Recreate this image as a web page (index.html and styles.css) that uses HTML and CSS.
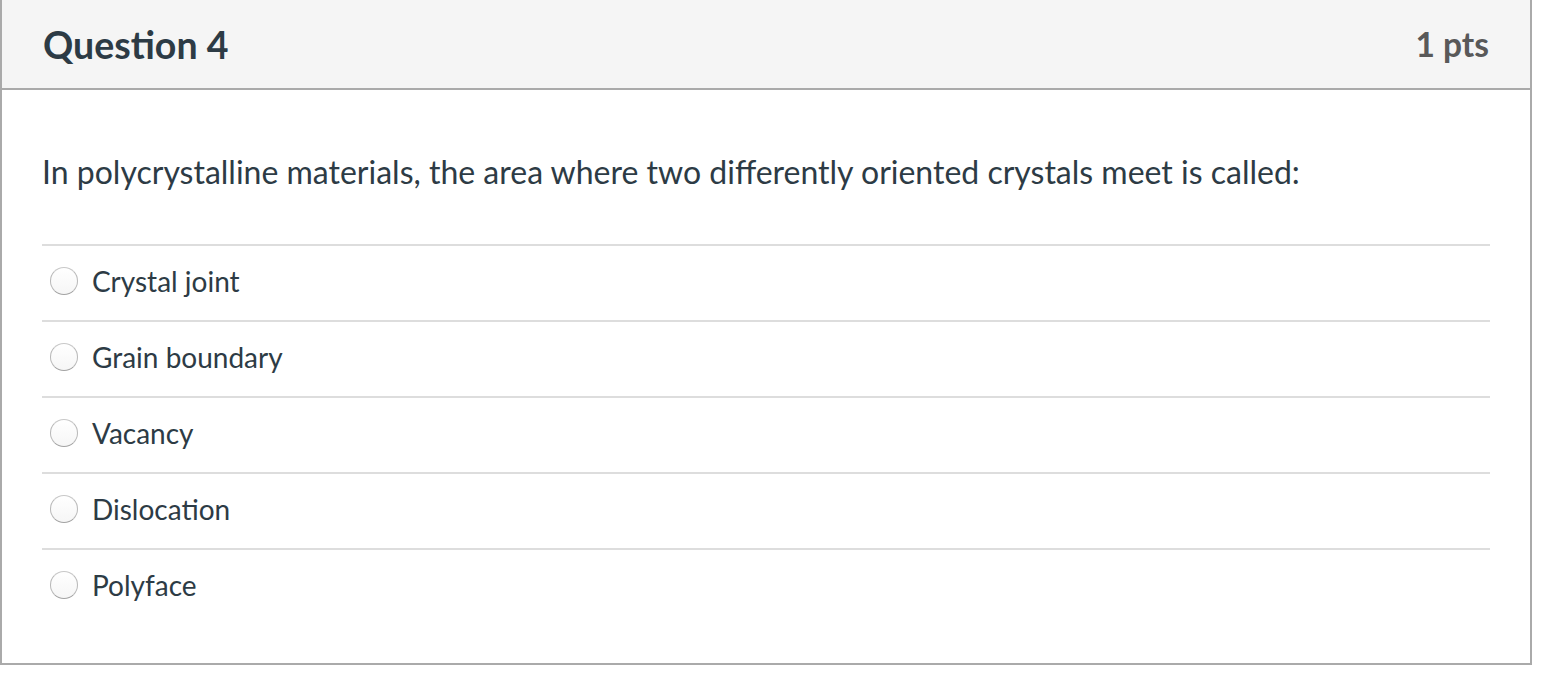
FILE: index.html
```html
<!DOCTYPE html>
<html>
<head>
<meta charset="utf-8">
<link rel="stylesheet" href="styles.css">
</head>
<body>
<div class="card">
  <div class="header">
    <span class="name">Question 4</span>
    <span class="points">1 pts</span>
  </div>
  <div class="body">
    <div class="qtext">In polycrystalline materials, the area where two differently oriented crystals meet is called:</div>
    <div class="answers">
      <div class="answer"><span class="radio"></span><span class="label">Crystal joint</span></div>
      <div class="answer"><span class="radio"></span><span class="label">Grain boundary</span></div>
      <div class="answer"><span class="radio"></span><span class="label">Vacancy</span></div>
      <div class="answer"><span class="radio"></span><span class="label">Dislocation</span></div>
      <div class="answer"><span class="radio"></span><span class="label">Polyface</span></div>
    </div>
  </div>
</div>
</body>
</html>
```
FILE: styles.css
```css
html, body {
  margin: 0;
  padding: 0;
  background: #fff;
}
body {
  font-family: Lato, "Open Sans", sans-serif;
  color: #2d3b45;
}
.card {
  width: 1528px;
  border: 2px solid #aaa;
  border-top: none;
}
.header {
  height: 88px;
  background: #f5f5f5;
  border-bottom: 2px solid #aaa;
  display: flex;
  align-items: center;
  justify-content: space-between;
  padding: 0 41px;
}
.name {
  font-size: 37.5px;
  font-weight: 700;
  color: #2d3b45;
}
.points {
  font-size: 33.5px;
  font-weight: 700;
  color: #595959;
}
.body {
  padding: 60px 40px 39px;
}
.qtext {
  font-size: 32px;
  line-height: 44px;
}
.answers {
  margin-top: 50px;
}
.answer {
  border-top: 2px solid #ddd;
  height: 74px;
  box-sizing: content-box;
  display: flex;
  align-items: center;
  padding-left: 8px;
}
.radio {
  width: 26px;
  height: 26px;
  border-radius: 50%;
  border: 1px solid;
  border-color: #c8c8c8 #b8b8b8 #a2a2a2 #b8b8b8;
  background: linear-gradient(#ffffff, #f6f6f6);
  flex: none;
  margin-top: -4px;
}
.label {
  margin-left: 14px;
  font-size: 28px;
  margin-top: -4px;
}
```
